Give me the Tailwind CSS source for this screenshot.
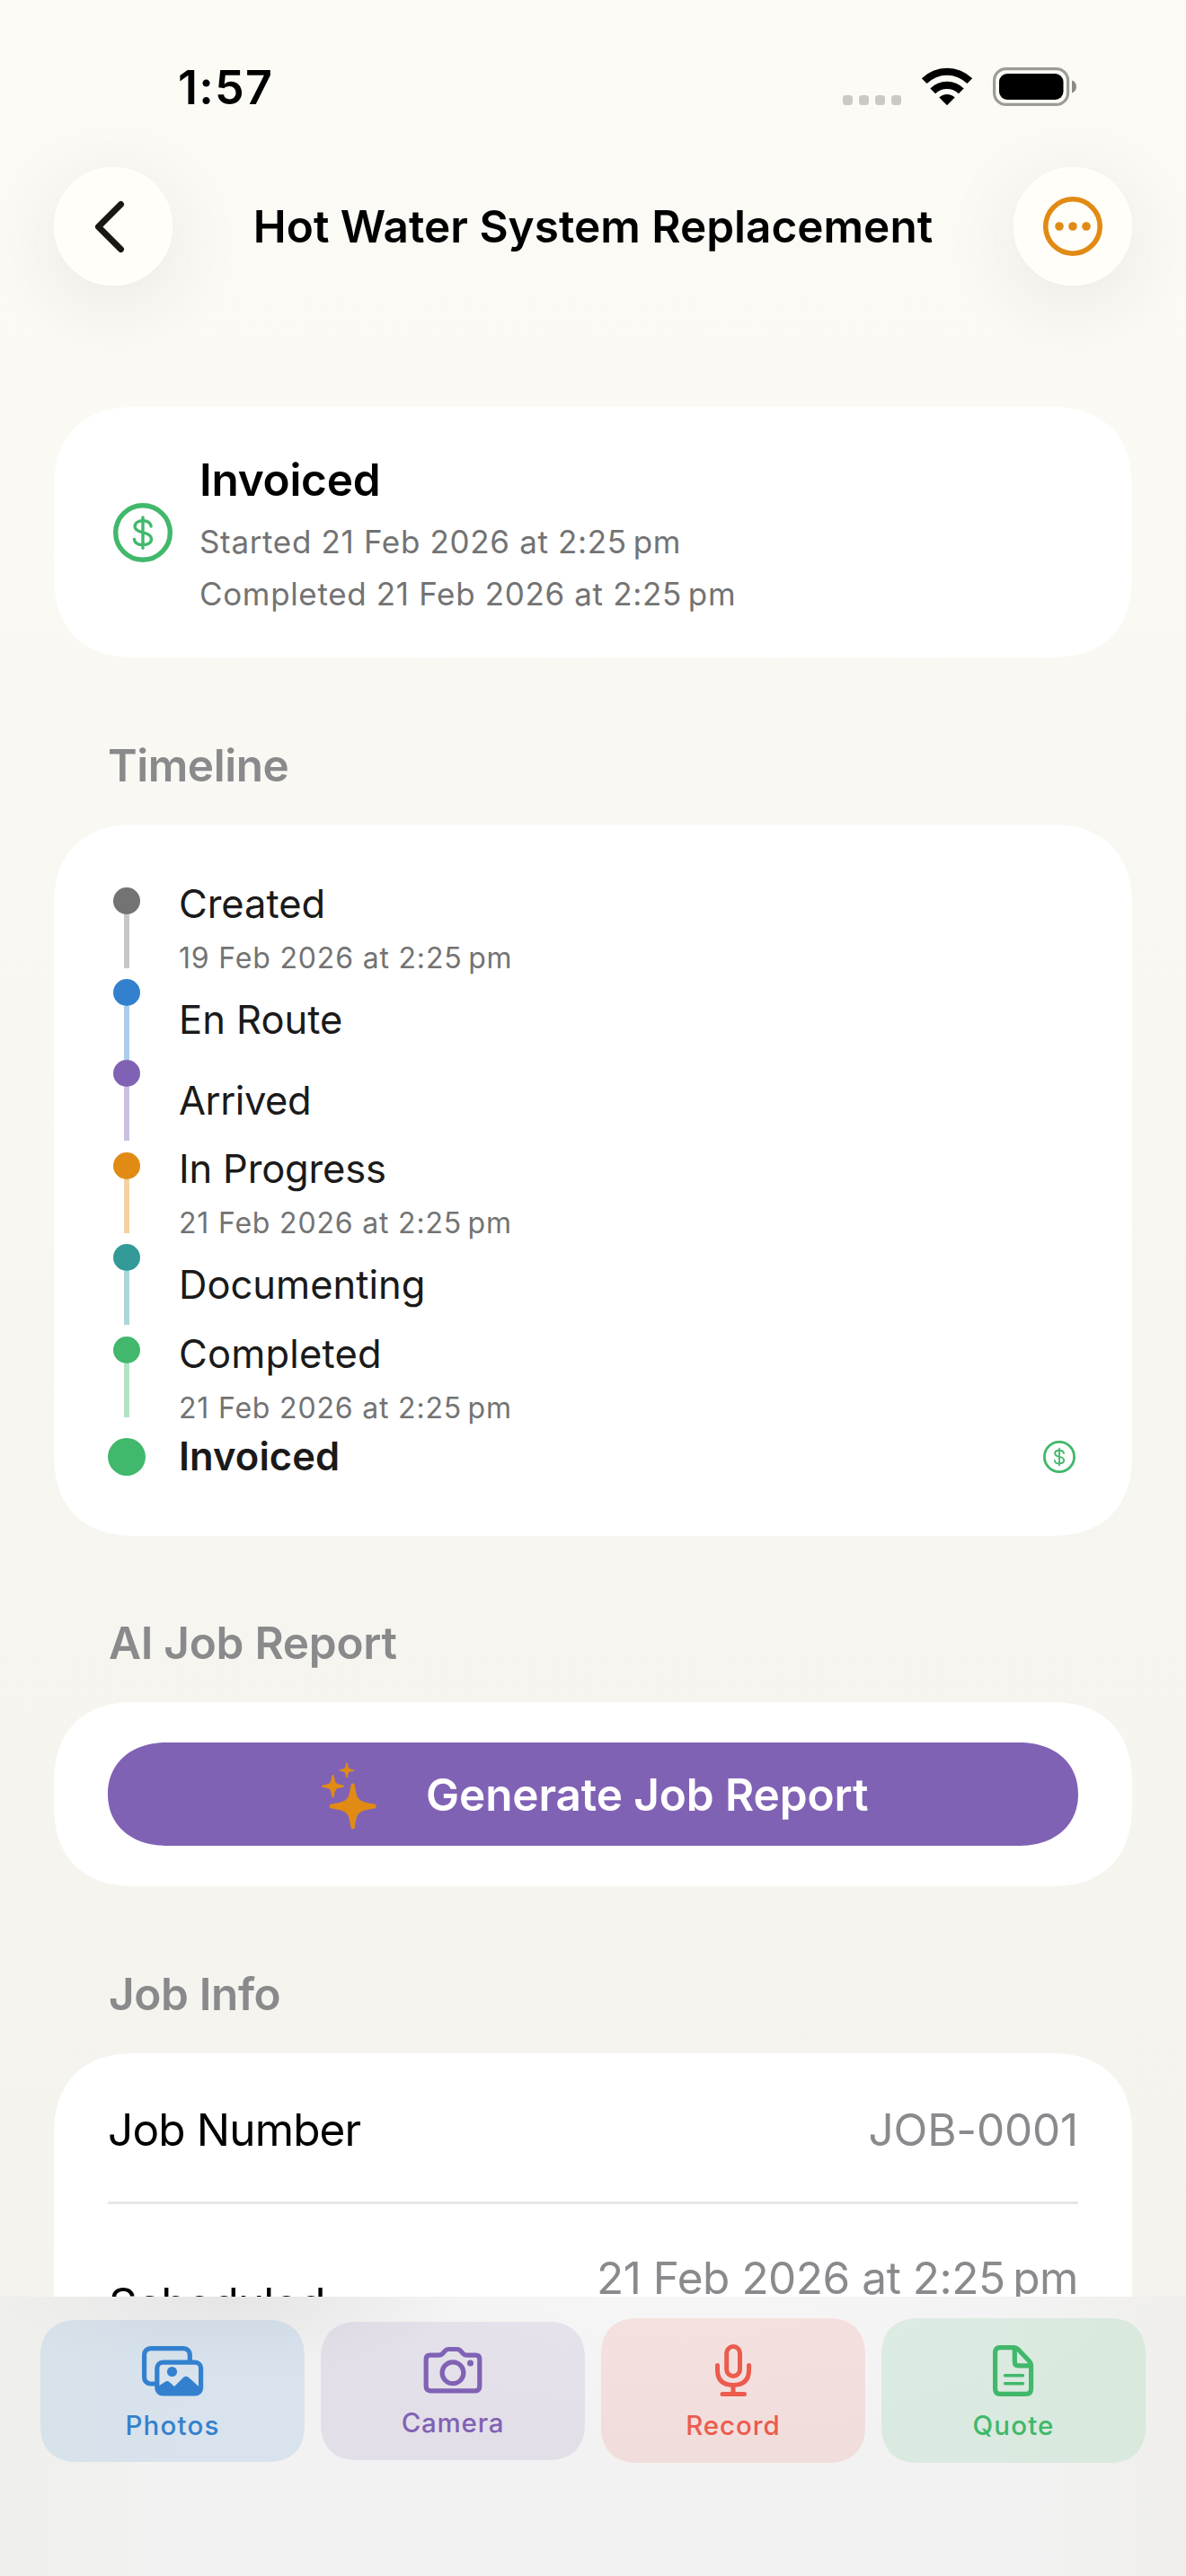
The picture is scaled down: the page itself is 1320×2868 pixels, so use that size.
<!DOCTYPE html>
<html lang="en">
<head>
<meta charset="utf-8">
<title>Hot Water System Replacement</title>
<script src="https://cdn.jsdelivr.net/npm/@tailwindcss/browser@4"></script>
</head>
<body class="h-[2868px] w-[1320px] overflow-hidden bg-linear-to-b from-[#fcfbf6] via-[#f8f6f1] to-[#f4f2ec] font-['Inter',sans-serif] text-black">
<svg class="hidden">
  <symbol id="dollar" viewBox="0 0 66 66">
    <path d="M42.2 26C41.4 22 38 19.8 33 19.8C27.6 19.8 24.1 22.5 24.1 26.2C24.1 30.1 27.5 31.5 33 32.8C39 34.2 42.5 35.8 42.5 40C42.5 44.1 38.9 46.6 33 46.6C27.4 46.6 24 44.4 23.4 40.4M33 16V50.200" fill="none" stroke="currentColor" stroke-width="3.400" stroke-linecap="round"/>
  </symbol>
</svg>
<div class="relative flex h-[2868px] flex-col overflow-hidden">

  <!-- Status bar -->
  <div class="flex h-[150px] items-center justify-between pt-[46px] pr-[122px] pl-[198px]">
    <span class="text-[52px] leading-[60px] font-semibold tracking-[1.24px]">1:57</span>
    <div class="flex items-center pb-[3px]">
      <div class="mt-[30px] flex gap-[7px]">
        <i class="h-[11px] w-[11px] rounded-[3.5px] bg-[#cac9c5]"></i>
        <i class="h-[11px] w-[11px] rounded-[3.5px] bg-[#cac9c5]"></i>
        <i class="h-[11px] w-[11px] rounded-[3.5px] bg-[#cac9c5]"></i>
        <i class="h-[11px] w-[11px] rounded-[3.5px] bg-[#cac9c5]"></i>
      </div>
      <svg class="ml-[22px] h-[43px] w-[58px]" viewBox="0 1.5 58 43">
        <path d="M0.8 13.8A40 40 0 0 1 57.2 13.8L51.4 19.6A31.8 31.8 0 0 0 6.6 19.6Z"/>
        <path d="M10.3 25A26.4 26.4 0 0 1 47.7 25L41.9 30.8A18.3 18.3 0 0 0 16.1 30.8Z"/>
        <path d="M20.3 35A12.3 12.3 0 0 1 37.7 35L29 43.8Z"/>
      </svg>
      <svg class="ml-[22px] h-[43px] w-[93px]" viewBox="0 0 93 43">
        <rect x="1.6" y="1.6" width="82" height="39.8" rx="13" fill="none" stroke="#9c9b98" stroke-width="3.2"/>
        <rect x="7" y="7" width="71.5" height="29" rx="9"/>
        <path d="M88 14.5C91 15.600 93 18 93 21.500S91 27.400 88 28.500Z" fill="#8c8b88"/>
      </svg>
    </div>
  </div>

  <!-- Navigation bar -->
  <div class="mt-[36px] flex h-[132px] items-center justify-between px-[60px]">
    <div class="flex h-[132px] w-[132px] items-center justify-center rounded-full bg-[#fffef9] pr-[9px] shadow-[0_18px_90px_rgba(40,40,30,0.09)] outline-2 -outline-offset-2 outline-white">
      <svg class="h-[60px] w-[40px]" viewBox="0 0 40 60"><path d="M32.500 5.500L7.500 30.500L32.500 55.500" fill="none" stroke="#191812" stroke-width="7" stroke-linecap="round" stroke-linejoin="round"/></svg>
    </div>
    <h1 class="text-[49.5px] leading-[66px] font-semibold whitespace-nowrap">Hot Water System Replacement</h1>
    <div class="flex h-[132px] w-[132px] items-center justify-center rounded-full bg-[#fffef9] shadow-[0_18px_90px_rgba(40,40,30,0.09)] outline-2 -outline-offset-2 outline-white">
      <svg class="h-[66px] w-[66px]" viewBox="0 0 66 66"><circle cx="33" cy="33" r="30.200" fill="none" stroke="#e18b14" stroke-width="5.600"/><g fill="#e18b14"><circle cx="18" cy="33" r="4.800"/><circle cx="33" cy="33" r="4.800"/><circle cx="48" cy="33" r="4.800"/></g></svg>
    </div>
  </div>

  <main class="mt-[135px] flex flex-col px-[60px]">
    <!-- Status card -->
    <section class="flex h-[279px] items-center rounded-[92px] bg-white pl-[66px] [corner-shape:superellipse(1.25)]">
      <svg class="h-[66px] w-[66px] text-[#41b86b]" viewBox="0 0 66 66"><circle cx="33" cy="33" r="30.300" fill="none" stroke="currentColor" stroke-width="5.400"/><use href="#dollar"/></svg>
      <div class="ml-[30px] flex flex-col">
        <h2 class="text-[49.5px] leading-[66px] font-semibold tracking-[-0.26px]">Invoiced</h2>
        <p class="mt-[12px] text-[35px] leading-[48px] tracking-[0.66px] text-[#737373]">Started 21 Feb 2026 at 2:25&#8239;pm</p>
        <p class="mt-[10px] text-[35px] leading-[48px] tracking-[0.65px] text-[#737373]">Completed 21 Feb 2026 at 2:25&#8239;pm</p>
      </div>
    </section>

    <!-- Timeline -->
    <h3 class="mt-[87px] mb-[33px] pl-[60px] text-[49.5px] leading-[66px] font-semibold tracking-[-0.45px] text-[#8a8a8c]">Timeline</h3>
    <section class="flex h-[792px] flex-col rounded-[92px] bg-white px-[60px] pt-[57px] text-[#1a1a1a] [corner-shape:superellipse(1.25)]">
      <div class="flex h-[115px] items-center">
        <div class="flex w-[42px] flex-col items-center"><i class="h-[30px] w-[30px] rounded-full bg-[#737373]"></i><i class="h-[60px] w-[6px] bg-[#c7c7c7]"></i></div>
        <div class="ml-[37px] flex flex-col pb-[2px]"><span class="text-[43.5px] leading-[60px] tracking-[-0.05px]">Created</span><span class="mt-[11px] text-[32px] leading-[40px] tracking-[0.82px] text-[#737373]">19 Feb 2026 at 2:25&#8239;pm</span></div>
      </div>
      <div class="flex h-[90px] items-center">
        <div class="flex w-[42px] flex-col items-center"><i class="h-[30px] w-[30px] rounded-full bg-[#3381ce]"></i><i class="h-[60px] w-[6px] bg-[#adcdec]"></i></div>
        <span class="ml-[37px] text-[43.5px] leading-[60px]">En Route</span>
      </div>
      <div class="flex h-[90px] items-center">
        <div class="flex w-[42px] flex-col items-center"><i class="h-[30px] w-[30px] rounded-full bg-[#8062b5]"></i><i class="h-[60px] w-[6px] bg-[#ccc0e1]"></i></div>
        <span class="ml-[37px] text-[43.5px] leading-[60px] tracking-[-0.44px]">Arrived</span>
      </div>
      <div class="flex h-[115px] items-center">
        <div class="flex w-[42px] flex-col items-center"><i class="h-[30px] w-[30px] rounded-full bg-[#e18b14]"></i><i class="h-[60px] w-[6px] bg-[#f3d1a1]"></i></div>
        <div class="ml-[37px] flex flex-col pb-[2px]"><span class="text-[43.5px] leading-[60px] tracking-[-0.18px]">In Progress</span><span class="mt-[11px] text-[32px] leading-[40px] tracking-[0.81px] text-[#737373]">21 Feb 2026 at 2:25&#8239;pm</span></div>
      </div>
      <div class="flex h-[90px] items-center">
        <div class="flex w-[42px] flex-col items-center"><i class="h-[30px] w-[30px] rounded-full bg-[#339a98]"></i><i class="h-[60px] w-[6px] bg-[#add7d6]"></i></div>
        <span class="ml-[37px] pb-px text-[43.5px] leading-[60px]">Documenting</span>
      </div>
      <div class="flex h-[116px] items-center">
        <div class="flex w-[42px] flex-col items-center"><i class="h-[30px] w-[30px] rounded-full bg-[#41b86b]"></i><i class="h-[60px] w-[6px] bg-[#b3e3c3]"></i></div>
        <div class="ml-[37px] flex flex-col pb-[2px]"><span class="text-[43.5px] leading-[60px] tracking-[0.17px]">Completed</span><span class="mt-[11px] text-[32px] leading-[40px] tracking-[0.81px] text-[#737373]">21 Feb 2026 at 2:25&#8239;pm</span></div>
      </div>
      <div class="flex h-[62px] items-center">
        <i class="h-[42px] w-[42px] rounded-full bg-[#41b86b]"></i>
        <span class="ml-[37px] pb-[2px] text-[43.5px] leading-[60px] font-semibold tracking-[0.06px]">Invoiced</span>
        <svg class="mr-[3px] ml-auto h-[36px] w-[36px] text-[#41b86b]" viewBox="0 0 66 66"><circle cx="33" cy="33" r="30.400" fill="none" stroke="currentColor" stroke-width="5.200"/><use href="#dollar"/></svg>
      </div>
    </section>

    <!-- AI job report -->
    <h3 class="mt-[86px] mb-[33px] pl-[61px] text-[49.5px] leading-[66px] font-semibold tracking-[-0.28px] text-[#8a8a8c]">AI Job Report</h3>
    <section class="flex h-[205px] items-center rounded-[92px] bg-white px-[60px] [corner-shape:superellipse(1.25)]">
      <div class="flex h-[115px] w-full items-center rounded-[66px/57.5px] bg-[#8062b5] pl-[236px] [corner-shape:superellipse(1.12)]">
        <svg class="h-[78px] w-[66px]" viewBox="0 0 66 78" fill="#e18b14">
          <path d="M36.700 26.500C38.300 26.500 38.800 27.800 39.100 29.800C41.300 44.600 42.500 46.600 58.700 49.200C61.200 49.600 62.800 50 62.800 52S61.200 54.400 58.700 54.800C42.500 57.400 41.300 59.400 39.100 74.200C38.800 76.200 38.300 77.500 36.700 77.500S34.600 76.200 34.300 74.200C32.100 59.400 30.900 57.400 14.700 54.800C12.200 54.400 10.600 54 10.600 52S12.200 49.600 14.700 49.200C30.900 46.600 32.100 44.600 34.300 29.800C34.600 27.800 35.100 26.500 36.700 26.500Z"/>
          <path d="M14.500 17C15.600 17 15.800 18.200 16.100 20.100C17.100 26.600 17.600 27.200 24.100 28.200C26 28.500 27 28.700 27 29.700S26 30.900 24.100 31.200C17.600 32.200 17.100 32.800 16.100 39.300C15.800 41.200 15.600 42.400 14.500 42.400S13.200 41.200 12.900 39.300C11.900 32.800 11.400 32.200 4.900 31.200C3 30.900 2 30.700 2 29.700S3 28.500 4.900 28.200C11.400 27.200 11.900 26.600 12.900 20.100C13.200 18.200 13.400 17 14.500 17Z"/>
          <path d="M30 3.600C30.700 3.600 30.900 4.300 31.100 5.500C31.800 10 32 10.200 36.500 10.900C37.700 11.100 38.300 11.300 38.300 12S37.700 12.900 36.500 13.100C32 13.800 31.800 14 31.100 18.500C30.900 19.700 30.700 20.400 30 20.400S29.100 19.700 28.900 18.500C28.200 14 28 13.800 23.500 13.100C22.300 12.900 21.700 12.700 21.700 12S22.300 11.100 23.500 10.900C28 10.200 28.200 10 28.900 5.500C29.100 4.300 29.300 3.600 30 3.600Z"/>
        </svg>
        <span class="ml-[52px] text-[49.5px] leading-[66px] font-semibold tracking-[-0.11px] whitespace-nowrap text-white">Generate Job Report</span>
      </div>
    </section>

    <!-- Job info -->
    <h3 class="mt-[87px] mb-[33px] pl-[61px] text-[49.5px] leading-[66px] font-semibold tracking-[-0.38px] text-[#8a8a8c]">Job Info</h3>
    <section class="flex h-[460px] shrink-0 flex-col rounded-t-[92px] bg-white px-[60px] [corner-shape:superellipse(1.25)]">
      <div class="flex h-[168px] items-center justify-between border-b-3 border-[#e6e6e6] pt-[5px]">
        <span class="text-[49.5px] leading-[66px] tracking-[-0.85px]">Job Number</span>
        <span class="text-[49.5px] leading-[66px] tracking-[-0.19px] text-[#8a8a8e]">JOB-0001</span>
      </div>
      <div class="flex items-start justify-between pt-[49px]">
        <span class="pt-[29px] pl-px text-[49.5px] leading-[66px] tracking-[-0.91px]">Scheduled</span>
        <span class="text-[49.5px] leading-[66px] tracking-[-0.46px] text-[#8a8a8e]">21 Feb 2026 at 2:25&#8239;pm</span>
      </div>
    </section>
  </main>

  <nav class="absolute inset-x-0 bottom-0 flex h-[311px] gap-[18px] bg-[#f2f2f2] bg-[radial-gradient(ellipse_260px_90px_at_250px_0px,#e5e5e5_0%,transparent_100%),radial-gradient(ellipse_500px_160px_at_760px_0px,#f6f6f6_0%,transparent_100%),linear-gradient(to_right,#efefec_0%,transparent_16%,transparent_84%,#f0efec_100%)] px-[45px]">
    <div class="mt-[26px] flex h-[158px] w-[294px] flex-col items-center rounded-[42px] bg-[#3381ce]/13 pt-[26px] text-[#3381ce] [corner-shape:superellipse(1.25)]">
      <svg class="h-[64px] w-[72px]" viewBox="0 0 72 64" fill="none" stroke="currentColor" stroke-width="5.200">
        <path d="M18.500 45H11.500A7 7 0 0 1 4.600 38V12.600A7 7 0 0 1 11.600 5.600H48.300A7 7 0 0 1 55.300 12.600V20"/>
        <rect x="18.800" y="21.200" width="48.800" height="34.800" rx="6.500"/>
        <circle cx="35.500" cy="31.500" r="5.600" fill="currentColor" stroke="none"/>
        <path d="M19 48.500L27.500 43Q30 41 32.500 43L38 48L48 38Q51 35.400 54 38L67.500 50V52Q67.500 56 63 56H24Q19 56 19 52Z" fill="currentColor" stroke="none"/>
      </svg>
      <span class="mt-[7px] text-[29.5px] leading-[40px] font-medium tracking-[1.19px]">Photos</span>
    </div>
    <div class="mt-[28px] flex h-[154px] w-[294px] flex-col items-center rounded-[42px] bg-[#8062b5]/13 pt-[24px] text-[#8062b5] [corner-shape:superellipse(1.25)]">
      <svg class="h-[64px] w-[72px]" viewBox="0 0 72 64" fill="none" stroke="currentColor" stroke-width="5.200" stroke-linejoin="round">
        <path d="M10.500 13.200H20.500Q23 13.200 24.500 11.500L27.500 8.200Q29.200 6.500 31.500 6.500H40.500Q42.800 6.500 44.500 8.200L47.500 11.500Q49 13.200 51.500 13.200H61.500Q65.800 13.200 65.800 18V47.800Q65.800 52.800 61 52.800H11Q6.200 52.800 6.200 47.800V18Q6.200 13.200 10.500 13.200Z"/>
        <circle cx="36" cy="32.800" r="11.900"/>
        <circle cx="55.500" cy="22" r="3.500" fill="currentColor" stroke="none"/>
      </svg>
      <span class="mt-[4px] text-[29.5px] leading-[40px] font-medium tracking-[0.8px]">Camera</span>
    </div>
    <div class="mt-[24px] flex h-[161px] w-[294px] flex-col items-center rounded-[42px] bg-[#ec5b4e]/13 pt-[26px] text-[#ec5b4e] [corner-shape:superellipse(1.25)]">
      <svg class="h-[64px] w-[72px]" viewBox="0 0 72 64" fill="none" stroke="currentColor" stroke-width="5" stroke-linecap="round">
        <rect x="28.700" y="5.500" width="14.800" height="33" rx="7.400"/>
        <path d="M18.500 26.500V31.500Q18.500 48.400 36 48.400T53.600 31.500V26.500M36 49V57.500M24 58.600H48.500"/>
      </svg>
      <span class="mt-[9px] text-[29.5px] leading-[40px] font-medium tracking-[0.93px]">Record</span>
    </div>
    <div class="mt-[24px] flex h-[161px] w-[294px] flex-col items-center rounded-[42px] bg-[#41b86b]/13 pt-[26px] text-[#41b86b] [corner-shape:superellipse(1.25)]">
      <svg class="h-[64px] w-[72px]" viewBox="0 0 72 64" fill="none" stroke="currentColor" stroke-width="5.200" stroke-linejoin="round">
        <path d="M21 6.600H36.500Q39.200 6.600 41 8.500L53.800 22Q55.600 24 55.600 26.500V52.500Q55.600 58.400 50 58.400H21Q15.600 58.400 15.600 52.500V12.500Q15.600 6.600 21 6.600Z"/>
        <path d="M37.300 7V22.500Q37.300 26.900 41.500 26.900H55"/>
        <path d="M26.500 37.800H46.500M26.500 46.800H46.500" stroke-width="3.400" stroke-linecap="round"/>
      </svg>
      <span class="mt-[9px] text-[29.5px] leading-[40px] font-medium tracking-[1.15px]">Quote</span>
    </div>
  </nav>
</div>
</body>
</html>
